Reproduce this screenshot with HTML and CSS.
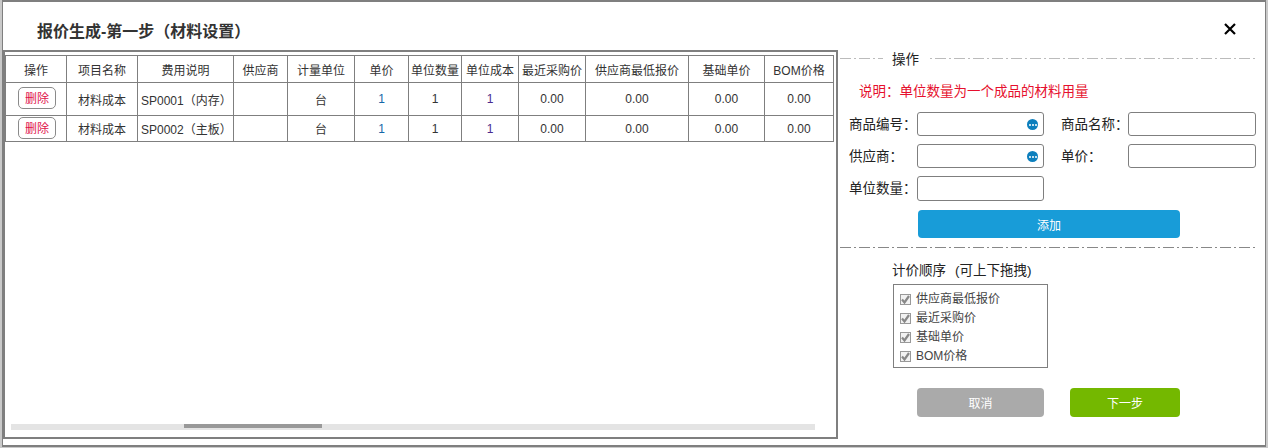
FILE: index.html
```html
<!DOCTYPE html>
<html lang="zh">
<head>
<meta charset="utf-8">
<title>报价生成</title>
<link rel="stylesheet" href="styles.css">
</head>
<body>
<div class="dialog">
  <header class="head">
    <h1 class="title">报价生成-第一步（材料设置）</h1>
    <button class="close" aria-label="关闭">
      <svg width="12" height="12" viewBox="0 0 12 12"><path d="M1 1L11 11M11 1L1 11" stroke="#000" stroke-width="2.2" fill="none"/></svg>
    </button>
  </header>
  <div class="main">
    <section class="frame">
      <table class="grid">
        <colgroup>
          <col class="c1"><col class="c2"><col class="c3"><col class="c4"><col class="c5"><col class="c6"><col class="c7"><col class="c8"><col class="c9"><col class="c10"><col class="c11"><col class="c12">
        </colgroup>
        <thead>
          <tr><th>操作</th><th>项目名称</th><th>费用说明</th><th>供应商</th><th>计量单位</th><th>单价</th><th>单位数量</th><th>单位成本</th><th>最近采购价</th><th>供应商最低报价</th><th>基础单价</th><th>BOM价格</th></tr>
        </thead>
        <tbody>
          <tr class="r1"><td><button class="del">删除</button></td><td>材料成本</td><td class="left">SP0001（内存）</td><td></td><td>台</td><td class="blue">1</td><td>1</td><td class="purple">1</td><td>0.00</td><td>0.00</td><td>0.00</td><td>0.00</td></tr>
          <tr class="r2"><td><button class="del">删除</button></td><td>材料成本</td><td class="left">SP0002（主板）</td><td></td><td>台</td><td class="blue">1</td><td>1</td><td class="purple">1</td><td>0.00</td><td>0.00</td><td>0.00</td><td>0.00</td></tr>
        </tbody>
      </table>
      <div class="scroll"><div class="thumb"></div></div>
    </section>
    <aside class="side">
      <div class="legend"><span class="legend-text">操作</span></div>
      <p class="note">说明：单位数量为一个成品的材料用量</p>
      <div class="form">
        <label class="lab">商品编号：</label>
        <div class="field"><span class="more"><i></i><i></i><i></i></span></div>
        <label class="lab lab2">商品名称：</label>
        <div class="field"></div>
        <label class="lab">供应商：</label>
        <div class="field"><span class="more"><i></i><i></i><i></i></span></div>
        <label class="lab lab2">单价：</label>
        <div class="field"></div>
        <label class="lab">单位数量：</label>
        <div class="field"></div>
      </div>
      <button class="btn add">添加</button>
      <div class="rule"></div>
      <div class="order-title">计价顺序<span class="hint">(可上下拖拽)</span></div>
      <ul class="order">
        <li><span class="check"><svg width="9" height="9" viewBox="0 0 9 9"><path d="M1 4.5L3.5 7.5L8 1" stroke="#888" stroke-width="2.2" fill="none"/></svg></span>供应商最低报价</li>
        <li><span class="check"><svg width="9" height="9" viewBox="0 0 9 9"><path d="M1 4.5L3.5 7.5L8 1" stroke="#888" stroke-width="2.2" fill="none"/></svg></span>最近采购价</li>
        <li><span class="check"><svg width="9" height="9" viewBox="0 0 9 9"><path d="M1 4.5L3.5 7.5L8 1" stroke="#888" stroke-width="2.2" fill="none"/></svg></span>基础单价</li>
        <li><span class="check"><svg width="9" height="9" viewBox="0 0 9 9"><path d="M1 4.5L3.5 7.5L8 1" stroke="#888" stroke-width="2.2" fill="none"/></svg></span>BOM价格</li>
      </ul>
      <div class="actions">
        <button class="btn cancel">取消</button>
        <button class="btn next">下一步</button>
      </div>
    </aside>
  </div>
</div>
</body>
</html>
```

FILE: styles.css
```css
* { box-sizing: border-box; }
html, body { margin: 0; padding: 0; }
body {
  width: 1268px;
  height: 448px;
  overflow: hidden;
  background: #c9c9c9;
  font-family: "Liberation Sans", "Noto Sans CJK SC", sans-serif;
  font-size: 12px;
  color: #333;
}
.dialog {
  width: 1264px;
  height: 447px;
  margin-left: 2px;
  background: #fff;
  border: 1px solid #7f7f7f;
  border-top-width: 2px;
  border-bottom-width: 2px;
}
.head {
  height: 48px;
  display: flex;
  align-items: flex-start;
  justify-content: space-between;
  padding: 19px 29px 0 34px;
}
.title {
  margin: 0;
  font-size: 16px;
  line-height: 22px;
  font-weight: bold;
  color: #333;
}
.close {
  width: 12px;
  height: 12px;
  padding: 0;
  margin-top: 2px;
  border: 0;
  background: none;
  display: flex;
}
.main { display: flex; align-items: flex-start; }
.frame {
  width: 835px;
  height: 389px;
  border: 2px solid #7f7f7f;
  padding: 3px 0 0 0;
  display: flex;
  flex-direction: column;
}
.grid {
  table-layout: fixed;
  border-collapse: collapse;
  width: 829px;
  text-align: center;
}
.grid th, .grid td {
  border: 1px solid #7f7f7f;
  padding: 0;
  font-weight: normal;
  overflow: hidden;
  white-space: nowrap;
}
.grid thead tr { height: 27px; }
.r1 { height: 33px; }
.r2 { height: 26px; }
.c1 { width: 61px; }
.c2 { width: 71px; }
.c3 { width: 96px; }
.c4 { width: 54px; }
.c5 { width: 67px; }
.c6 { width: 54px; }
.c7 { width: 53px; }
.c8 { width: 57px; }
.c9 { width: 67px; }
.c10 { width: 103px; }
.c11 { width: 76px; }
.c12 { width: 69px; }
.grid .left { text-align: left; padding-left: 3px; }
.blue { color: #1567a8; }
.purple { color: #4a2a90; }
.del {
  width: 38px;
  height: 22px;
  padding: 0;
  display: block;
  margin: 0 0 3px 12px;
  border: 1px solid #8a8a8a;
  border-radius: 5px;
  background: #fff;
  color: #e0114a;
  font: inherit;
}
.r2 .del { margin-bottom: 2px; }
.scroll {
  position: relative;
  width: 804px;
  height: 6px;
  margin: auto 0 7px 6px;
  background: #e4e4e4;
}
.thumb {
  position: absolute;
  left: 173px;
  top: 0;
  width: 138px;
  height: 4px;
  background: #999;
}
.side {
  width: 416px;
  margin-left: 2px;
  color: #333;
}
.legend {
  height: 20px;
  margin-top: -2px;
  display: flex;
  align-items: center;
  background: repeating-linear-gradient(90deg, #bbb 0 11px, #fff 11px 14px, #bbb 14px 16px, #fff 16px 19px) left center / 100% 1px no-repeat;
}
.legend-text {
  margin-left: 43px;
  padding: 0 9px;
  background: #fff;
  color: #222;
  font-size: 13.5px;
}
.note {
  margin: 15px 0 0 19px;
  height: 20px;
  line-height: 18px;
  color: #e60f2d;
  font-size: 13.5px;
}
.form {
  display: grid;
  grid-template-columns: 68px 127px 17px 67px 128px;
  grid-template-rows: 24px 24px 25px;
  row-gap: 8px;
  margin: 9px 0 0 9px;
  width: 408px;
}
.lab { line-height: 25px; color: #222; font-size: 13.5px; white-space: nowrap; }
.lab2 { grid-column: 4; }
.field {
  position: relative;
  border: 1px solid #7f7f7f;
  border-radius: 3px;
  background: #fff;
}
.more {
  position: absolute;
  right: 5px;
  top: 6px;
  width: 11px;
  height: 11px;
  border-radius: 50%;
  background: #0d7fbd;
  display: flex;
  align-items: center;
  justify-content: center;
  gap: 1px;
}
.more i { width: 2px; height: 2px; background: #fff; border-radius: 50%; }
.btn {
  border: 0;
  border-radius: 4px;
  color: #fff;
  font: inherit;
  padding: 0;
}
.add {
  display: block;
  width: 262px;
  height: 28px;
  margin: 9px 0 0 78px;
  background: #189cd8;
}
.rule {
  height: 1px;
  margin-top: 9px;
  background: repeating-linear-gradient(90deg, #888 0 11px, #fff 11px 14px, #888 14px 16px, #fff 16px 19px);
}
.order-title {
  margin: 14px 0 0 52px;
  height: 20px;
  line-height: 18px;
  color: #222;
  font-size: 13.5px;
}
.hint { margin-left: 9px; }
.order {
  list-style: none;
  width: 155px;
  height: 84px;
  margin: 2px 0 0 53px;
  padding: 5px 0 0 6px;
  border: 1px solid #7f7f7f;
}
.order li {
  height: 19px;
  line-height: 19px;
  display: flex;
  align-items: center;
  color: #444;
}
.check {
  width: 11px;
  height: 11px;
  margin-right: 5px;
  border: 1px solid #999;
  background: #f2f2f2;
  display: flex;
  align-items: center;
  justify-content: center;
}
.actions {
  display: flex;
  gap: 26px;
  margin: 20px 0 0 77px;
}
.cancel { width: 127px; height: 29px; background: #aaa; }
.next { width: 110px; height: 29px; background: #74b800; }
```
